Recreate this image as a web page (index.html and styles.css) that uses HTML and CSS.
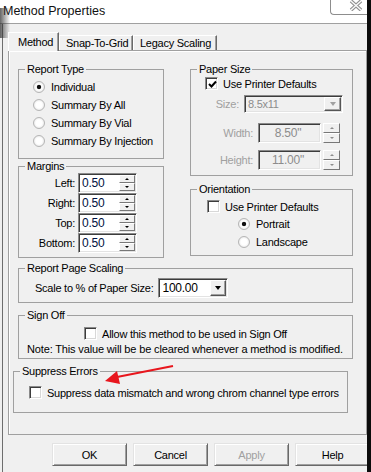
FILE: index.html
```html
<!DOCTYPE html>
<html lang="en">
  <head>
    <meta charset="UTF-8" />
    <title>Method Properties</title>
    <link rel="stylesheet" href="styles.css">
  </head>
  <body>
    <div class="window">
      <div class="titlebar">
        <span class="title">Method Properties</span>
        <div class="close-btn">
          <svg width="14" height="11" viewBox="0 0 14 11">
            <path d="M2 1 L12 10 M12 1 L2 10" stroke="#8f8f8f" stroke-width="3.6" />
            <path d="M2 1 L12 10 M12 1 L2 10" stroke="#fafafa" stroke-width="1.4" />
          </svg>
        </div>
      </div>
      <div class="shade"></div>

      <div class="body">
        <div class="tabs">
          <div class="tab active">Method</div>
          <div class="tab">Snap-To-Grid</div>
          <div class="tab">Legacy Scaling</div>
        </div>

        <div class="tab-page">
          <div class="top-row">
            <div class="col left-col">
              <fieldset class="group report-type">
                <legend>Report Type</legend>
                <div class="options">
                  <div class="option"><span class="radio checked"></span>Individual</div>
                  <div class="option"><span class="radio"></span>Summary By All</div>
                  <div class="option"><span class="radio"></span>Summary By Vial</div>
                  <div class="option"><span class="radio"></span>Summary By Injection</div>
                </div>
              </fieldset>

              <fieldset class="group margins">
                <legend>Margins</legend>
                <div class="margin-row">
                  <span class="margin-label">Left:</span>
                  <div class="field spin-field">
                    <span class="value">0.50</span>
                    <span class="spin"><span class="spin-btn up"></span><span class="spin-btn down"></span></span>
                  </div>
                </div>
                <div class="margin-row">
                  <span class="margin-label">Right:</span>
                  <div class="field spin-field">
                    <span class="value">0.50</span>
                    <span class="spin"><span class="spin-btn up"></span><span class="spin-btn down"></span></span>
                  </div>
                </div>
                <div class="margin-row">
                  <span class="margin-label">Top:</span>
                  <div class="field spin-field">
                    <span class="value">0.50</span>
                    <span class="spin"><span class="spin-btn up"></span><span class="spin-btn down"></span></span>
                  </div>
                </div>
                <div class="margin-row">
                  <span class="margin-label">Bottom:</span>
                  <div class="field spin-field">
                    <span class="value">0.50</span>
                    <span class="spin"><span class="spin-btn up"></span><span class="spin-btn down"></span></span>
                  </div>
                </div>
              </fieldset>
            </div>

            <div class="col right-col">
              <fieldset class="group paper-size">
                <legend>Paper Size</legend>
                <div class="check-row paper-check">
                  <span class="checkbox">
                    <svg width="9" height="9" viewBox="0 0 9 9"><path d="M1 4 L3.5 6.5 L8 1.5" fill="none" stroke="#000" stroke-width="2" /></svg>
                  </span>Use Printer Defaults
                </div>
                <div class="paper-row size-row">
                  <span class="paper-label size-label">Size:</span>
                  <div class="field combo disabled size-combo">
                    <span class="value">8.5x11</span>
                    <span class="drop-btn"><span class="arrow-down"></span></span>
                  </div>
                </div>
                <div class="paper-row dim-row">
                  <span class="paper-label">Width:</span>
                  <div class="field disabled dim-field"><span class="value">8.50"</span></div>
                  <span class="spin loose"><span class="spin-btn up"></span><span class="spin-btn down"></span></span>
                </div>
                <div class="paper-row dim-row height-row">
                  <span class="paper-label">Height:</span>
                  <div class="field disabled dim-field"><span class="value">11.00"</span></div>
                  <span class="spin loose"><span class="spin-btn up"></span><span class="spin-btn down"></span></span>
                </div>
              </fieldset>

              <fieldset class="group orientation">
                <legend>Orientation</legend>
                <div class="check-row orient-check">
                  <span class="checkbox"></span>Use Printer Defaults
                </div>
                <div class="orient-options">
                  <div class="option"><span class="radio checked"></span>Portrait</div>
                  <div class="option"><span class="radio"></span>Landscape</div>
                </div>
              </fieldset>
            </div>
          </div>

          <fieldset class="group wide scaling">
            <legend>Report Page Scaling</legend>
            <div class="scale-row">
              <span>Scale to % of Paper Size:</span>
              <div class="field combo scale-combo">
                <span class="value">100.00</span>
                <span class="drop-btn"><span class="arrow-down"></span></span>
              </div>
            </div>
          </fieldset>

          <fieldset class="group wide sign-off">
            <legend>Sign Off</legend>
            <div class="check-row sign-check">
              <span class="checkbox"></span>Allow this method to be used in Sign Off
            </div>
            <div class="note">Note: This value will be be cleared whenever a method is modified.</div>
          </fieldset>

          <fieldset class="group wide suppress">
            <legend>Suppress Errors</legend>
            <div class="check-row suppress-check">
              <span class="checkbox"></span>Suppress data mismatch and wrong chrom channel type errors
            </div>
          </fieldset>
        </div>

        <div class="buttons">
          <button class="btn">OK</button>
          <button class="btn">Cancel</button>
          <button class="btn" disabled>Apply</button>
          <button class="btn">Help</button>
        </div>
      </div>

      <svg class="annotation" width="371" height="472" viewBox="0 0 371 472">
        <path d="M173 366 L117 377" stroke="#e8161d" stroke-width="2" />
        <polygon points="105,381 117,371 120,384" fill="#e8161d" />
      </svg>
    </div>
  </body>
</html>
```

FILE: styles.css
```css
* {
  box-sizing: border-box;
}
body {
  margin: 0;
  width: 371px;
  height: 472px;
  overflow: hidden;
  font-family: "Liberation Sans", Arial, sans-serif;
  font-size: 11px;
  letter-spacing: -0.25px;
  color: #000;
  background: #f0f0f0;
}
.window {
  position: relative;
  display: flex;
  flex-direction: column;
  height: 472px;
  border-right: 4px solid #0c0c0c;
}
.titlebar {
  display: flex;
  height: 24px;
  background: #fff;
  border-bottom: 1px solid #a0a0a0;
}
.title {
  padding: 4px 0 0 3px;
  font-size: 12.5px;
  line-height: 15px;
  letter-spacing: 0;
  color: #111;
}
.close-btn {
  margin-left: auto;
  width: 37px;
  height: 15px;
  padding: 0 0 0 18px;
  border: 1px solid #8d8d8d;
  border-top: none;
  border-right: none;
  border-bottom-left-radius: 4px;
}
.close-btn svg {
  display: block;
}
.shade {
  position: absolute;
  left: 0;
  top: 8px;
  width: 10px;
  height: 30px;
  background: linear-gradient(to right, rgba(50, 50, 50, 0.75), rgba(50, 50, 50, 0));
}
.body {
  flex: 1;
  display: flex;
  flex-direction: column;
  margin-left: 2px;
  border-left: 1px solid #6e6e6e;
  padding: 8px 0 0 5px;
  overflow: hidden;
}

/* tabs */
.tabs {
  display: flex;
  align-items: flex-end;
  height: 18px;
  position: relative;
  z-index: 1;
}
.tab {
  height: 15px;
  padding: 1px 0 0 6px;
  line-height: 13px;
  border: 1px solid #fff;
  border-bottom: none;
  border-right-color: #6a6a6a;
  box-shadow: inset -1px 0 0 #a0a0a0;
  background: #f0f0f0;
}
.tab:nth-child(2) {
  width: 74px;
}
.tab:nth-child(3) {
  width: 84px;
}
.tab.active {
  width: 51px;
  height: 19px;
  margin-bottom: -1px;
  padding: 3px 0 0 9px;
}
.tab-page {
  width: 359px;
  height: 385px;
  border: 1px solid #a0a0a0;
  box-shadow: inset 1px 1px 0 #fff;
  padding: 12px 0 0 9px;
}

/* group boxes */
.group {
  margin: 0;
  padding: 0;
  min-width: 0;
  border: 1px solid #a0a0a0;
}
.group legend {
  margin-left: 6px;
  padding: 0 2px;
  line-height: 13px;
}
.top-row {
  display: flex;
  gap: 26px;
  height: 195px;
}
.left-col {
  width: 146px;
}
.right-col {
  width: 163px;
}
.report-type {
  height: 96px;
}
.margins {
  height: 98px;
  margin-top: 1px;
}
.paper-size {
  height: 113px;
}
.orientation {
  height: 73px;
  margin-top: 7px;
}
.wide {
  width: 335px;
}
.scaling {
  height: 41px;
  margin-top: 4px;
}
.sign-off {
  height: 50px;
  margin-top: 6px;
}
.suppress {
  height: 48px;
  margin-top: 6px;
  margin-left: -5px;
}

/* radio + checkbox */
.options {
  padding: 2px 0 0 14px;
}
.option {
  display: flex;
  align-items: center;
  gap: 6px;
  height: 18px;
}
.radio {
  width: 12px;
  height: 12px;
  border-radius: 50%;
  border: 1px solid #b5b5b5;
  background: radial-gradient(circle, #fff 0, #fff 3px, #e4e4e4 6px);
}
.radio.checked {
  background: radial-gradient(circle, #111 0, #111 1.8px, #fff 2.6px, #fff 3px, #e4e4e4 6px);
}
.check-row {
  display: flex;
  align-items: center;
  gap: 5px;
  height: 13px;
}
.checkbox {
  width: 13px;
  height: 13px;
  padding: 1px 0 0 1px;
  border: 1px solid;
  border-color: #8a8a8a #fff #fff #8a8a8a;
  box-shadow: inset 1px 1px 0 #3c3c3c, inset -1px -1px 0 #d8d8d8;
  background: #fff;
}
.checkbox svg {
  display: block;
  margin: 1px 0 0 1px;
}

/* edit fields */
.field {
  display: flex;
  align-items: center;
  height: 20px;
  border: 1px solid;
  border-color: #8a8a8a #fff #fff #8a8a8a;
  box-shadow: inset 1px 1px 0 #3c3c3c, inset -1px -1px 0 #e3e3e3;
  background: #fff;
}
.field .value {
  padding-left: 3px;
}
.field.disabled {
  background: #f0f0f0;
  color: #8c8c8c;
}
.spin {
  display: flex;
  flex-direction: column;
  width: 17px;
  height: 100%;
  margin-left: auto;
  padding: 1px 1px 1px 0;
}
.spin.loose {
  height: 20px;
  margin-left: 2px;
  padding: 0;
}
.spin-btn {
  flex: 1;
  display: flex;
  align-items: center;
  justify-content: center;
  border: 1px solid;
  border-color: #fff #777 #777 #fff;
  background: #f0f0f0;
}
.spin-btn::after {
  content: "";
  border-left: 2px solid transparent;
  border-right: 2px solid transparent;
}
.spin-btn.up::after {
  border-bottom: 2px solid #000;
}
.spin-btn.down::after {
  border-top: 2px solid #000;
}
.loose .spin-btn.up::after {
  border-bottom-color: #8c8c8c;
}
.loose .spin-btn.down::after {
  border-top-color: #8c8c8c;
}

/* margins */
.margin-row {
  display: flex;
  align-items: center;
  height: 20px;
}
.margin-label {
  width: 56px;
  margin-right: 3px;
  text-align: right;
}
.spin-field {
  width: 59px;
}
.spin-field .value {
  font-size: 12px;
  color: #001040;
}

/* combos */
.drop-btn {
  display: flex;
  align-items: center;
  justify-content: center;
  width: 16px;
  height: 16px;
  margin: 0 1px 0 auto;
  border: 1px solid;
  border-color: #fff #555 #555 #fff;
  box-shadow: inset -1px -1px 0 #a0a0a0;
  background: #f0f0f0;
}
.arrow-down {
  border-left: 3.5px solid transparent;
  border-right: 3.5px solid transparent;
  border-top: 4px solid #000;
}
.combo.disabled .arrow-down {
  border-top-color: #a0a0a0;
}

/* paper size */
.paper-check {
  margin-top: 1px;
  padding-left: 14px;
}
.paper-row {
  display: flex;
  align-items: center;
}
.paper-label {
  width: 62px;
  margin-right: 5px;
  text-align: right;
  color: #a0a0a0;
}
.size-row {
  margin-top: 5px;
  height: 18px;
}
.size-label {
  width: 48px;
}
.size-combo {
  width: 99px;
  height: 18px;
}
.size-combo .drop-btn {
  width: 17px;
  height: 14px;
}
.dim-row {
  margin-top: 10px;
  height: 20px;
}
.height-row {
  margin-top: 7px;
}
.dim-field {
  width: 63px;
  justify-content: center;
  padding-right: 6px;
  font-size: 12px;
}

/* orientation */
.orient-check {
  margin-top: 4px;
  padding-left: 16px;
}
.orient-options {
  padding: 2px 0 0 47px;
}

/* scaling */
.scale-row {
  display: flex;
  align-items: center;
  height: 20px;
  margin-top: 3px;
  padding-left: 16px;
}
.scale-combo {
  width: 70px;
  margin-left: 5px;
}
.scale-combo .value {
  font-size: 12px;
}

/* sign off / suppress */
.sign-check {
  justify-content: center;
  margin-top: 5px;
}
.note {
  margin-top: 3px;
  padding-left: 8px;
  line-height: 13px;
  letter-spacing: -0.15px;
}
.suppress-check {
  margin-top: 8px;
  padding-left: 15px;
}

/* dialog buttons */
.buttons {
  display: flex;
  gap: 6px;
  margin: 8px 0 0 44px;
}
.btn {
  flex: none;
  width: 75px;
  height: 23px;
  padding: 0;
  font: inherit;
  letter-spacing: inherit;
  color: #000;
  border: 1px solid;
  border-color: #e3e3e3 #696969 #696969 #e3e3e3;
  box-shadow: inset 1px 1px 0 #fff, inset -1px -1px 0 #a0a0a0;
  background: #f0f0f0;
}
.btn:disabled {
  color: #a0a0a0;
}
.annotation {
  position: absolute;
  left: 0;
  top: 0;
  pointer-events: none;
}
```
